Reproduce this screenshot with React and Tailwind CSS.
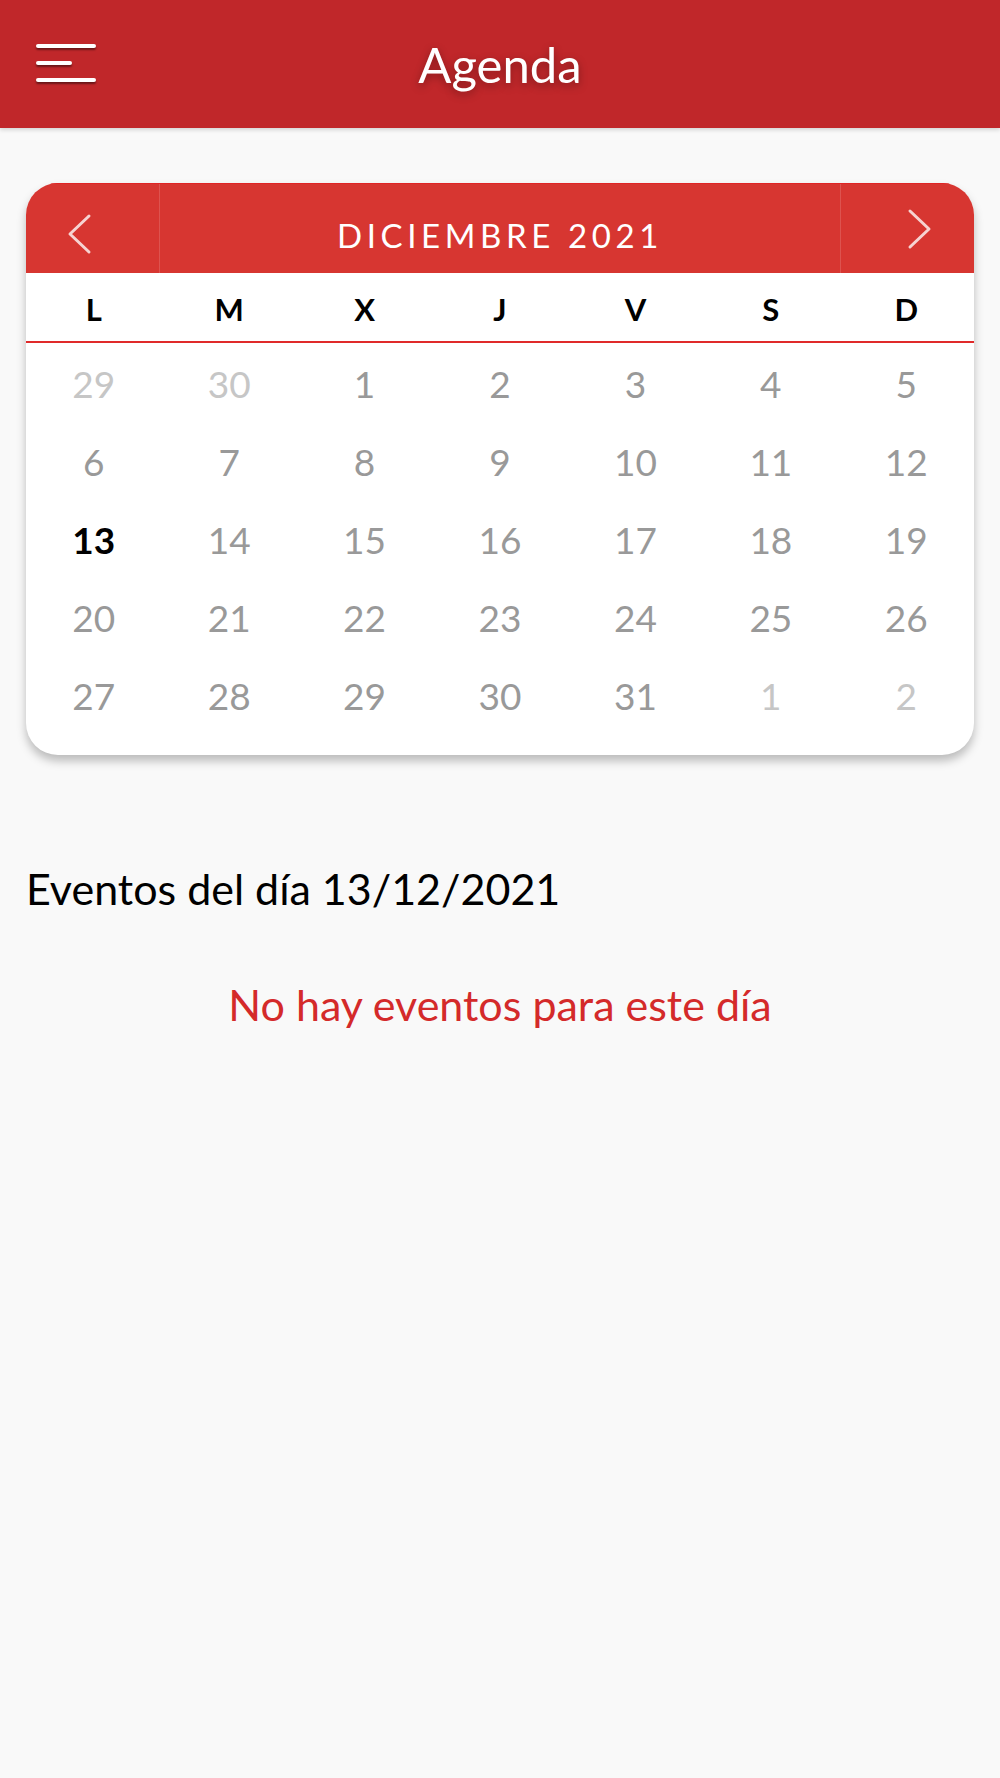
import React from 'react';

const WEEKDAYS = ['L', 'M', 'X', 'J', 'V', 'S', 'D'];

// each row: [day, isCurrentMonth]
const WEEKS = [
  [[29, false], [30, false], [1, true], [2, true], [3, true], [4, true], [5, true]],
  [[6, true], [7, true], [8, true], [9, true], [10, true], [11, true], [12, true]],
  [[13, true], [14, true], [15, true], [16, true], [17, true], [18, true], [19, true]],
  [[20, true], [21, true], [22, true], [23, true], [24, true], [25, true], [26, true]],
  [[27, true], [28, true], [29, true], [30, true], [31, true], [1, false], [2, false]],
];

const SELECTED = 13;

function Chevron({ dir }) {
  return (
    <svg width="26" height="42" viewBox="0 0 26 42" fill="none">
      <path
        d={dir === 'left' ? 'M22 3 L3 21 L22 39' : 'M4 3 L23 21 L4 39'}
        stroke="rgba(255,255,255,0.78)"
        strokeWidth="3"
        strokeLinecap="round"
        strokeLinejoin="round"
      />
    </svg>
  );
}

export default function App() {
  return (
    <div className="min-h-[1778px] bg-[#f9f9f9] font-['Lato','Noto_Sans',sans-serif]">
      <header className="relative flex h-[128px] items-center justify-center bg-[#c0272a] shadow-[0_2px_4px_rgba(0,0,0,0.15)]">
        <button className="absolute left-[36px] top-[44px] flex w-[60px] flex-col gap-[13px]" aria-label="Menú">
          <span className="block h-[4px] w-[60px] rounded-full bg-white shadow-[0_2px_2px_rgba(0,0,0,0.45)]" />
          <span className="block h-[4px] w-[36px] rounded-full bg-white shadow-[0_2px_2px_rgba(0,0,0,0.45)]" />
          <span className="block h-[4px] w-[60px] rounded-full bg-white shadow-[0_2px_2px_rgba(0,0,0,0.45)]" />
        </button>
        <h1 className="text-[49px] leading-[1.2] text-white [text-shadow:0_3px_8px_rgba(0,0,0,0.35)]">Agenda</h1>
      </header>

      <div className="mx-[26px] mt-[55px] overflow-hidden rounded-[32px] bg-white pb-[22px] shadow-[0_6px_10px_rgba(0,0,0,0.25)]">
        <div className="flex h-[90px] border-t border-[#e02424] bg-[#d73631]">
          <button className="flex w-[134px] items-center justify-center border-r border-[rgba(255,255,255,0.15)] pr-[25px] pt-[10px]">
            <Chevron dir="left" />
          </button>
          <div className="flex flex-1 items-center justify-center pt-[14px] text-[33px] tracking-[0.14em] text-white">
            DICIEMBRE 2021
          </div>
          <button className="flex w-[134px] items-center justify-center border-l border-[rgba(255,255,255,0.15)] pl-[23px] pt-[1px]">
            <Chevron dir="right" />
          </button>
        </div>

        <div className="grid h-[70px] grid-cols-7 items-center border-b-2 border-[#e02a2a] pt-[5px]">
          {WEEKDAYS.map((d) => (
            <div key={d} className="text-center text-[31px] font-bold text-black">
              {d}
            </div>
          ))}
        </div>

        {WEEKS.map((week, i) => (
          <div key={i} className="grid h-[78px] grid-cols-7 items-center pt-[3px]">
            {week.map(([day, current], j) => {
              const selected = current && day === SELECTED;
              return (
                <div
                  key={j}
                  className={
                    'text-center text-[37px] ' +
                    (selected ? 'font-bold text-black' : current ? 'text-[#999999]' : 'text-[#c6c6c6]')
                  }
                >
                  {day}
                </div>
              );
            })}
          </div>
        ))}
      </div>

      <h2 className="ml-[26px] mt-[108px] text-[43px] leading-[1.2] text-black">Eventos del día 13/12/2021</h2>
      <p className="mt-[64px] text-center text-[43px] leading-[1.2] text-[#d42a2a]">No hay eventos para este día</p>
    </div>
  );
}
